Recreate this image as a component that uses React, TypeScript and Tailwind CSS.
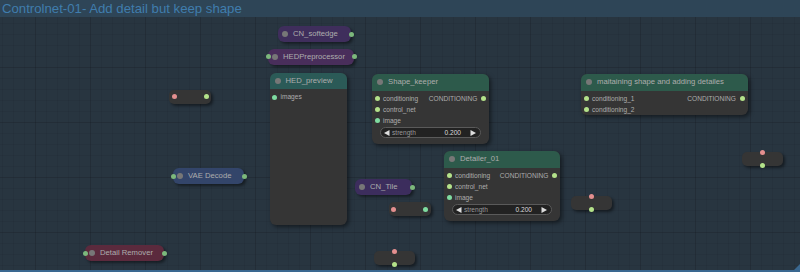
import type { ReactNode } from 'react'

const font = "font-['Liberation_Sans',Arial,sans-serif]"

function Dot({ className }: { className: string }) {
  return <span className={`block w-[5px] h-[5px] rounded-full shrink-0 ${className}`} />
}

function Collapsed({ pos, bg, title, input, output }: { pos: string; bg: string; title: string; input?: boolean; output?: boolean }) {
  return (
    <div className={`absolute h-[16px] rounded-[6px] flex items-center shadow-[2px_2px_3px_rgba(0,0,0,0.45)] ${pos} ${bg}`}>
      {input && <Dot className="absolute -left-[2.5px] top-[5.5px] bg-[#7cb87c]" />}
      <span className="ml-[4px] w-[6px] h-[6px] rounded-full bg-[#777] shrink-0" />
      <span className="ml-[5px] text-[7.7px] text-[#adadad] whitespace-nowrap">{title}</span>
      {output && <Dot className="absolute -right-[2.5px] top-[5.5px] bg-[#7cb87c]" />}
    </div>
  )
}

function Reroute({ pos, right = 'bg-[#b4e28a]' }: { pos: string; right?: string }) {
  return (
    <div className={`absolute h-[14px] w-[42px] rounded-[5px] bg-[#353535] flex items-center justify-between px-[2.5px] shadow-[2px_2px_3px_rgba(0,0,0,0.45)] ${pos}`}>
      <Dot className="bg-[#e48f8f]" />
      <Dot className={right} />
    </div>
  )
}

function VReroute({ pos }: { pos: string }) {
  return (
    <div className={`absolute h-[14px] w-[41px] rounded-[5px] bg-[#353535] shadow-[2px_2px_3px_rgba(0,0,0,0.45)] ${pos}`}>
      <Dot className="absolute left-[17.5px] -top-[2px] bg-[#e48f8f]" />
      <Dot className="absolute left-[17.5px] -bottom-[2px] bg-[#b4e28a]" />
    </div>
  )
}

function Node({ pos, header, title, children }: { pos: string; header: string; title: string; children: ReactNode }) {
  return (
    <div className={`absolute rounded-[6px] bg-[#353535] shadow-[2px_2px_4px_rgba(0,0,0,0.5)] flex flex-col ${pos}`}>
      <div className={`h-[16.5px] rounded-t-[6px] flex items-center shrink-0 ${header}`}>
        <span className="ml-[5px] w-[6px] h-[6px] rounded-full bg-[#777]" />
        <span className="ml-[5px] text-[7.7px] text-[#adadad] whitespace-nowrap">{title}</span>
      </div>
      {children}
    </div>
  )
}

function Slot({ label, color = 'bg-[#b4e28a]', out }: { label: string; color?: string; out?: string }) {
  return (
    <div className="h-[11px] flex items-center">
      <Dot className={`ml-[2.5px] ${color}`} />
      <span className="ml-[3.5px] text-[6.6px] text-[#adadad] whitespace-nowrap">{label}</span>
      {out && (
        <>
          <span className="ml-auto text-[6.6px] text-[#adadad]">{out}</span>
          <Dot className="ml-[3.5px] mr-[3px] bg-[#b4e28a]" />
        </>
      )}
    </div>
  )
}

function Strength() {
  return (
    <div className="mx-[8px] mt-[1px] h-[11px] rounded-full bg-[#222] border border-[#5a5a5a] flex items-center px-[3px]">
      <svg width="6" height="6" viewBox="0 0 6 6" className="shrink-0"><polygon points="5.5,0 5.5,6 0,3" fill="#ddd" /></svg>
      <span className="ml-[2px] text-[6.6px] text-[#999]">strength</span>
      <span className="ml-auto mr-[9px] text-[6.6px] text-[#ddd]">0.200</span>
      <svg width="6" height="6" viewBox="0 0 6 6" className="shrink-0 mr-[1px]"><polygon points="0.5,0 0.5,6 6,3" fill="#ddd" /></svg>
    </div>
  )
}

export default function App() {
  return (
    <div className={`relative w-[800px] h-[272px] overflow-hidden bg-[#283540] ${font}`}>
      {/* grid */}
      <div className="absolute inset-0 bg-[linear-gradient(90deg,rgba(0,0,0,0.09)_1px,transparent_1px),linear-gradient(rgba(0,0,0,0.09)_1px,transparent_1px),linear-gradient(90deg,rgba(0,0,0,0.05)_1px,transparent_1px),linear-gradient(rgba(0,0,0,0.05)_1px,transparent_1px)] bg-[size:55px_55px,55px_55px,11px_11px,11px_11px] bg-[position:35px_12px,35px_12px,2px_1px,2px_1px]" />

      {/* group title */}
      <div className="absolute left-0 right-0 top-0 h-[17px] bg-[#2e4557] pl-[2px] text-[13.2px] leading-[17px] text-[#407dad] whitespace-nowrap">
        Controlnet-01- Add detail but keep shape
      </div>

      <Collapsed pos="left-[278px] top-[26px] w-[73px]" bg="bg-[#3f2e5c]" title="CN_softedge" output />
      <Collapsed pos="left-[268px] top-[48.5px] w-[86px]" bg="bg-[#492e5b]" title="HEDPreprocessor" input output />
      <Collapsed pos="left-[173px] top-[168px] w-[71px]" bg="bg-[#33456a]" title="VAE Decode" input output />
      <Collapsed pos="left-[355px] top-[179px] w-[57px]" bg="bg-[#3c2d5d]" title="CN_Tile" output />
      <Collapsed pos="left-[85px] top-[245px] w-[79px]" bg="bg-[#5b2a3d]" title="Detail Remover" input output />

      <Reroute pos="left-[169px] top-[89.5px]" />
      <Reroute pos="left-[388.5px] top-[202px]" right="bg-[#7fdca0]" />
      <VReroute pos="left-[374px] top-[251px]" />
      <VReroute pos="left-[571px] top-[196px]" />
      <VReroute pos="left-[742px] top-[152px]" />

      <Node pos="left-[269.5px] top-[72.5px] w-[77.5px] h-[152px]" header="bg-[#2b5a57]" title="HED_preview">
        <div className="pt-[2.5px]">
          <Slot label="images" color="bg-[#7fdca0]" />
        </div>
      </Node>

      <Node pos="left-[372px] top-[74px] w-[117px] h-[70px]" header="bg-[#2d5a4b]" title="Shape_keeper">
        <div className="pt-[2.5px]">
          <Slot label="conditioning" out="CONDITIONING" />
          <Slot label="control_net" />
          <Slot label="image" color="bg-[#7fdca0]" />
          <Strength />
        </div>
      </Node>

      <Node pos="left-[444px] top-[151px] w-[116px] h-[70px]" header="bg-[#2d5a4b]" title="Detailer_01">
        <div className="pt-[2.5px]">
          <Slot label="conditioning" out="CONDITIONING" />
          <Slot label="control_net" />
          <Slot label="image" color="bg-[#7fdca0]" />
          <Strength />
        </div>
      </Node>

      <Node pos="left-[581px] top-[74px] w-[166.5px] h-[41px]" header="bg-[#2d5a4b]" title="maitaining shape and adding detailes">
        <div className="pt-[2.5px]">
          <Slot label="conditioning_1" out="CONDITIONING" />
          <Slot label="conditioning_2" />
        </div>
      </Node>

      {/* group bottom edge + resize handle */}
      <div className="absolute left-0 right-0 bottom-0 h-[2px] bg-[#3a6890]" />
      <svg className="absolute right-0 bottom-0" width="8" height="8" viewBox="0 0 8 8"><polygon points="8,0 8,8 0,8" fill="#3a6890" /></svg>
    </div>
  )
}
